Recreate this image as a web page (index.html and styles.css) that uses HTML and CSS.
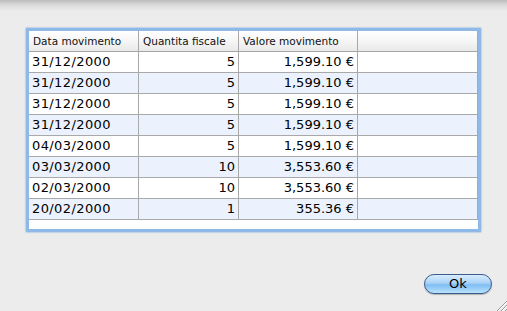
FILE: index.html
```html
<!DOCTYPE html>
<html>
<head>
<meta charset="utf-8">
<link rel="stylesheet" href="styles.css">
</head>
<body>
<div class="sheet">
  <div class="tablebox">
    <div class="grid">
      <div class="row head">
        <div class="c c1">Data movimento</div>
        <div class="c c2">Quantita fiscale</div>
        <div class="c c3">Valore movimento</div>
        <div class="c c4"></div>
      </div>
      <div class="row"><div class="c c1">31/12/2000</div><div class="c c2 num">5</div><div class="c c3 num">1,599.10 €</div><div class="c c4"></div></div>
      <div class="row alt"><div class="c c1">31/12/2000</div><div class="c c2 num">5</div><div class="c c3 num">1,599.10 €</div><div class="c c4"></div></div>
      <div class="row"><div class="c c1">31/12/2000</div><div class="c c2 num">5</div><div class="c c3 num">1,599.10 €</div><div class="c c4"></div></div>
      <div class="row alt"><div class="c c1">31/12/2000</div><div class="c c2 num">5</div><div class="c c3 num">1,599.10 €</div><div class="c c4"></div></div>
      <div class="row"><div class="c c1">04/03/2000</div><div class="c c2 num">5</div><div class="c c3 num">1,599.10 €</div><div class="c c4"></div></div>
      <div class="row alt"><div class="c c1">03/03/2000</div><div class="c c2 num">10</div><div class="c c3 num">3,553.60 €</div><div class="c c4"></div></div>
      <div class="row"><div class="c c1">02/03/2000</div><div class="c c2 num">10</div><div class="c c3 num">3,553.60 €</div><div class="c c4"></div></div>
      <div class="row alt"><div class="c c1">20/02/2000</div><div class="c c2 num">1</div><div class="c c3 num">355.36 €</div><div class="c c4"></div></div>
      <div class="filler"></div>
    </div>
  </div>
  <div class="actions">
    <button class="ok">Ok</button>
  </div>
  <svg class="grip" width="12" height="12" viewBox="0 0 12 12">
    <path d="M12 2 L2 12 M12 6 L6 12 M12 10 L10 12" stroke="#9a9a9a" stroke-width="1"/>
    <path d="M12 3 L3 12 M12 7 L7 12" stroke="#ffffff" stroke-width="1"/>
  </svg>
</div>
</body>
</html>
```
FILE: styles.css
```css
html, body {
  margin: 0;
  padding: 0;
}
body {
  width: 507px;
  height: 311px;
  overflow: hidden;
  background: #ececec;
  font-family: "DejaVu Sans", "Liberation Sans", sans-serif;
}
.sheet {
  position: relative;
  width: 507px;
  height: 311px;
  box-sizing: border-box;
  padding: 28px 0 0 26px;
  background: linear-gradient(#bcbcbc 0px, #dadada 5px, #ececec 11px);
  display: flex;
  flex-direction: column;
}
.tablebox {
  width: 449px;
  border: 3px solid #8fb9e6;
  border-radius: 1px;
  background: #ffffff;
  box-shadow: 0 0 1px 1px rgba(110, 160, 220, 0.35);
}
.grid {
  display: flex;
  flex-direction: column;
}
.row {
  display: flex;
  height: 21px;
  box-sizing: border-box;
  border-bottom: 1px solid #a9a9a9;
  background: #ffffff;
}
.row.alt {
  background: #ebf2fd;
}
.row.head {
  background: linear-gradient(#ffffff, #f6f6f6 50%, #e9e9e9);
  border-bottom: 1px solid #a6a6a6;
}
.c {
  box-sizing: border-box;
  height: 20px;
  line-height: 20px;
  font-size: 13px;
  color: #000;
  padding: 0 3px;
  border-right: 1px solid #a9a9a9;
  white-space: nowrap;
  overflow: hidden;
}
.row .c1 {
  letter-spacing: 0.4px;
}
.head .c {
  font-size: 10.5px;
  padding: 0 4px;
  color: #111;
  letter-spacing: 0;
}
.c1 { width: 110px; }
.c2 { width: 100px; }
.c3 { width: 119px; }
.c4 { width: 120px; }
.num {
  text-align: right;
}
.filler {
  height: 9px;
  background: #ffffff;
}
.actions {
  display: flex;
  justify-content: flex-end;
  padding: 42px 15px 0 0;
}
.ok {
  width: 68px;
  height: 20px;
  border-radius: 10px;
  border: 1px solid #3e5a8c;
  background: linear-gradient(#d7ecfd 0%, #a9d2f7 45%, #7fbdf2 55%, #b9e3fd 100%);
  box-shadow: 0 1px 1px rgba(0,0,0,0.25);
  font-family: "DejaVu Sans", "Liberation Sans", sans-serif;
  font-size: 13px;
  color: #000;
  padding: 0;
  line-height: 18px;
}
.grip {
  position: absolute;
  right: 0;
  bottom: 0;
}
```
